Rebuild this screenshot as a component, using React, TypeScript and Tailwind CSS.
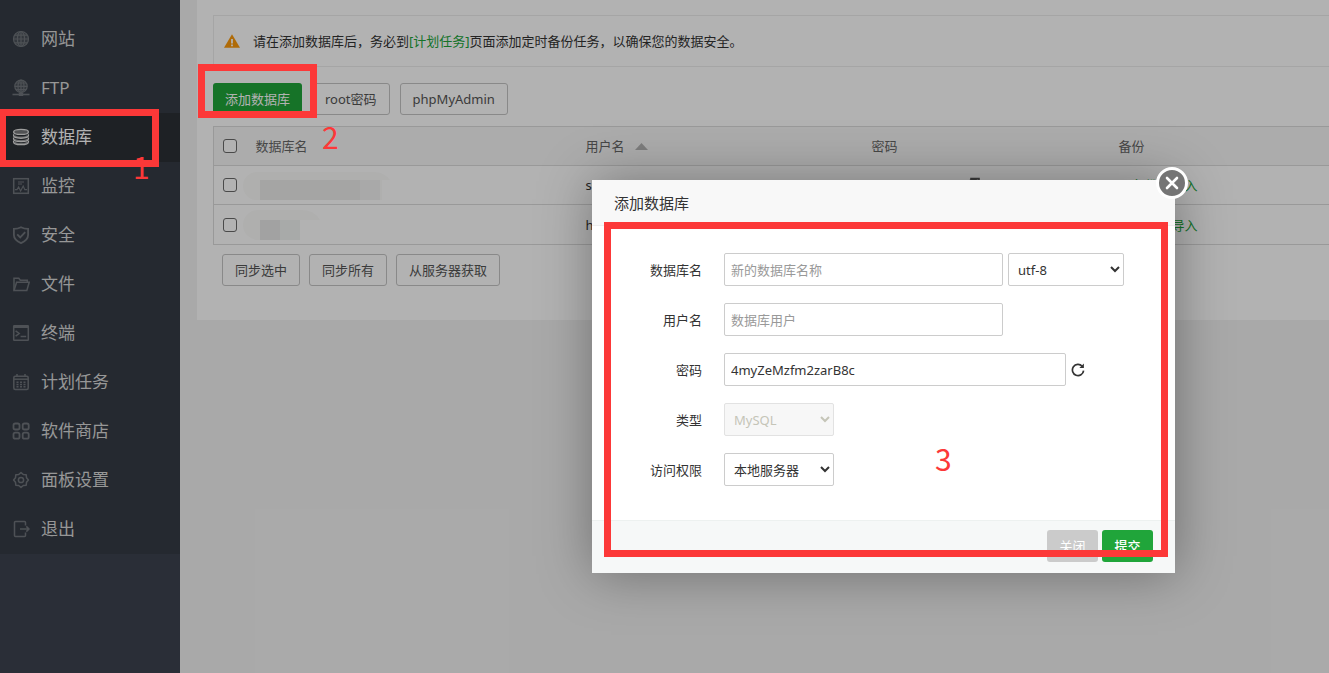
import type { ReactNode } from "react";

function Glyph({ children, width = "1.3" }: { children: ReactNode; width?: string }) {
  return (
    <svg
      viewBox="0 0 18 18"
      className="size-[18px] shrink-0"
      fill="none"
      stroke="currentColor"
      strokeWidth={width}
      aria-hidden="true"
    >
      {children}
    </svg>
  );
}

const icons: Record<string, ReactNode> = {
  site: (
    <Glyph width="1.2">
      <circle cx="9" cy="9" r="7.5" fill="currentColor" fillOpacity="0.35" />
      <ellipse cx="9" cy="9" rx="3.6" ry="7.5" />
      <path d="M9 1.5v15M1.5 9h15M2.6 5.2h12.8M2.6 12.8h12.8" />
    </Glyph>
  ),
  ftp: (
    <Glyph width="1.2">
      <circle cx="9" cy="7.3" r="6.2" fill="currentColor" fillOpacity="0.35" />
      <ellipse cx="9" cy="7.3" rx="3" ry="6.2" />
      <path d="M9 1v12.5M2.8 7.3h12.4M4 4h10M4 10.6h10" />
      <path d="M0.5 15.5h17" strokeWidth="1.6" />
      <path d="M6.8 15.5h4.4" strokeWidth="3" />
    </Glyph>
  ),
  database: (
    <Glyph width="1.3">
      <ellipse cx="9" cy="3.9" rx="7.400" ry="2.500" fill="currentColor" fillOpacity="0.4" />
      <path d="M1.600 6.200v1.400c0 3.500 14.800 3.500 14.800 0V6.200" />
      <path d="M1.600 9.600v1.400c0 3.500 14.800 3.500 14.800 0V9.600" />
      <path d="M1.600 12.800v1.200c0 3.600 14.800 3.600 14.800 0v-1.200" />
      <path d="M2.500 7.700c2 2 11 2 13 0M2.500 11.100c2 2 11 2 13 0M2.500 14.200c2 2 11 2 13 0" strokeOpacity="0.6" />
    </Glyph>
  ),
  monitor: (
    <Glyph width="1.5">
      <rect x="1.7" y="1.7" width="14.6" height="14.6" />
      <path d="M6 5h6M6 7h4" strokeWidth="1" />
      <path d="M3 12.6h2l1.6-2.6 2 4 2.6-5 1.6 3.6H15" strokeWidth="1.1" />
    </Glyph>
  ),
  security: (
    <Glyph width="1.8">
      <path d="M9 1.2c2.4 1.3 4.6 1.7 7.1 1.7v6c0 3.8-3 6.3-7.1 8.2-4.1-1.900-7.100-4.400-7.100-8.200v-6C4.400 2.900 6.600 2.500 9 1.200z" />
      <path d="M5.200 8.400l3 3 5-5.200" />
    </Glyph>
  ),
  files: (
    <Glyph width="1.5">
      <path d="M2 15.500V3.300h4.800l1.500 1.900h7v2" />
      <path d="M2 15.600L4.600 7.200h12.600l-2.400 8.400z" />
    </Glyph>
  ),
  terminal: (
    <Glyph width="1.500">
      <rect x="1.700" y="1.700" width="14.600" height="14.600" rx="0.500" />
      <path d="M1.700 3h14.600" strokeWidth="2" />
      <path d="M3.600 6.800l3.600 2.700-3.600 2.700M8.600 12.600h5.600" strokeWidth="1.500" />
    </Glyph>
  ),
  cron: (
    <Glyph width="1.500">
      <rect x="1.800" y="3.200" width="14.400" height="13.200" rx="1.500" />
      <path d="M1.800 6.200h14.400" />
      <path d="M5 1v3M13 1v3" />
      <path d="M4.500 9.200h9M4.500 11.500h9M4.500 13.800h9" strokeDasharray="2 1.500" />
    </Glyph>
  ),
  store: (
    <Glyph width="1.800">
      <rect x="1.500" y="1.500" width="6" height="6" rx="1.800" />
      <rect x="10.700" y="1.500" width="6" height="6" rx="1.800" />
      <rect x="1.500" y="10.700" width="6" height="6" rx="1.800" />
      <rect x="10.700" y="10.700" width="6" height="6" rx="1.800" />
    </Glyph>
  ),
  settings: (
    <Glyph width="1.500">
      <circle cx="9" cy="9" r="2.600" />
      <path d="M9 1.600L11.300 3.500L14.200 3.800L14.500 6.700L16.400 9L14.500 11.300L14.200 14.200L11.300 14.500L9 16.400L6.700 14.500L3.800 14.200L3.500 11.300L1.600 9L3.500 6.700L3.800 3.800L6.700 3.500z" strokeLinejoin="round" />
    </Glyph>
  ),
  logout: (
    <Glyph width="1.500">
      <path d="M13.500 5.500V2.500a1 1 0 0 0-1-1H3.500a1 1 0 0 0-1 1v13a1 1 0 0 0 1 1h9a1 1 0 0 0 1-1v-3" />
      <path d="M8 9h9M14.300 6.400L17 9l-2.700 2.600" />
    </Glyph>
  ),
};

const menu = [
  ["site", "网站"],
  ["ftp", "FTP"],
  ["database", "数据库"],
  ["monitor", "监控"],
  ["security", "安全"],
  ["files", "文件"],
  ["terminal", "终端"],
  ["cron", "计划任务"],
  ["store", "软件商店"],
  ["settings", "面板设置"],
  ["logout", "退出"],
];

function Sidebar() {
  return (
    <nav className="w-[180px] shrink-0 bg-[#3d4350]">
      <ul className="bg-[#363c46] pt-[15px] text-[17px]">
        {menu.map(([id, label]) => {
          const active = id === "database";
          return (
            <li key={id}>
              <a
                href={"#" + id}
                aria-current={active ? "page" : undefined}
                className={
                  "flex h-[49px] items-center gap-[11px] pb-px pl-3 " +
                  (active ? "bg-[#2c3035] text-white" : "text-[#d8d8d8]")
                }
              >
                <span className={active ? "text-[#e2e2e2]" : "text-[#70757b]"}>{icons[id]}</span>
                {label}
              </a>
            </li>
          );
        })}
      </ul>
    </nav>
  );
}

function OutlineButton({ children }: { children: ReactNode }) {
  return (
    <button type="button" className="h-8 rounded-[3px] border border-[#c4c4c4] px-3 text-[#555]">
      {children}
    </button>
  );
}

function Check({ label }: { label: string }) {
  return (
    <input
      type="checkbox"
      aria-label={label}
      className="block size-[14px] appearance-none rounded-[3px] border border-[#6a6a6a] bg-white"
    />
  );
}

function Backup() {
  return (
    <span className="text-[#20a53a]">
      <a href="#backup">无备份</a> | <a href="#import">导入</a>
    </span>
  );
}

function DatabasePage() {
  return (
    <main className="min-w-0 flex-1 bg-[#f3f3f3] pl-[17px]">
      <div className="bg-white pb-[34px] pl-4 pt-[15px]">
        <div className="flex h-[52px] items-center gap-[13px] border-y border-l border-[#ececec] pl-[10px]">
          <svg viewBox="0 0 16 14" className="h-[14px] w-4" aria-hidden="true">
            <path d="M8 0.300L16 13.700H0z" fill="#fb9a0c" />
            <path d="M8 5v4.500M8 10.500v1.800" stroke="#fff" strokeWidth="1.800" />
          </svg>
          <p>
            请在添加数据库后，务必到
            <a href="#cron" className="text-[#20a53a]">
              [计划任务]
            </a>
            页面添加定时备份任务，以确保您的数据安全。
          </p>
        </div>
        <div className="mt-4 flex gap-[10px]">
          <button type="button" className="h-8 rounded-[3px] bg-[#20a53a] px-3 text-white">
            添加数据库
          </button>
          <OutlineButton>root密码</OutlineButton>
          <OutlineButton>phpMyAdmin</OutlineButton>
        </div>
        <table className="mt-[11px] w-full table-fixed border-collapse border-y border-l border-[#dcdcdc] text-left">
          <colgroup>
            <col className="w-[34px]" />
            <col className="w-[330px]" />
            <col className="w-[286px]" />
            <col className="w-[247px]" />
            <col />
          </colgroup>
          <thead className="bg-[#f7f7f7] text-[#666]">
            <tr className="h-[39px] border-b border-[#dcdcdc]">
              <th className="pl-[9px]">
                <Check label="全选" />
              </th>
              <th className="pl-2 font-normal">数据库名</th>
              <th className="pl-2 font-normal">
                <span className="flex items-center gap-[10px]">
                  用户名
                  <svg viewBox="0 0 13 7" className="h-[7px] w-[13px]" aria-hidden="true">
                    <path d="M6.500 0L13 7H0z" fill="#b4b4b4" />
                  </svg>
                </span>
              </th>
              <th className="pl-2 font-normal">密码</th>
              <th className="pl-2 font-normal">备份</th>
            </tr>
          </thead>
          <tbody>
            <tr className="h-[39px] border-b border-[#dcdcdc]">
              <td className="pl-[9px]">
                <Check label="选择第一行" />
              </td>
              <td>
                <svg viewBox="0 0 150 34" className="-ml-2 block h-[34px] w-[150px]" aria-hidden="true">
                  <path d="M17 4H134Q144 4 150 12H142V32H17A14 14 0 0 1 17 4z" fill="#fbfbfa" />
                  <path d="M20 12h100v20H20z" fill="#ececeb" />
                  <path d="M120 12h20v20h-20z" fill="#f3f3f3" />
                </svg>
              </td>
              <td className="pl-2">s</td>
              <td className="pl-[103px]">
                <svg
                  viewBox="0 0 13 16"
                  className="block h-4 w-[13px]"
                  fill="none"
                  stroke="#555"
                  strokeWidth="1.600"
                  aria-hidden="true"
                >
                  <path d="M4 3V1.500h8v10H10M4 3L1 5v9.500h8V3z" fill="#999" />
                </svg>
              </td>
              <td className="pl-2">
                <Backup />
              </td>
            </tr>
            <tr className="h-10">
              <td className="pl-[9px]">
                <Check label="选择第二行" />
              </td>
              <td>
                <svg viewBox="0 0 80 34" className="-ml-2 block h-[34px] w-20" aria-hidden="true">
                  <path d="M18 2H62Q74 2 80 12H60V32H18A15 15 0 0 1 18 2z" fill="#fbfbfa" />
                  <path d="M20 12h20v20H20z" fill="#e9e9e9" />
                  <path d="M40 12h20v20H40z" fill="#f1f4f3" />
                </svg>
              </td>
              <td className="pl-2">h</td>
              <td />
              <td className="pl-2">
                <Backup />
              </td>
            </tr>
          </tbody>
        </table>
        <div className="mt-[9px] flex gap-[9px] pl-[9px]">
          <OutlineButton>同步选中</OutlineButton>
          <OutlineButton>同步所有</OutlineButton>
          <OutlineButton>从服务器获取</OutlineButton>
        </div>
      </div>
    </main>
  );
}

function Field({ id, label, children }: { id: string; label: string; children: ReactNode }) {
  return (
    <div className="flex h-[33px] items-center">
      <label htmlFor={id} className="mr-[22px] w-[110px] shrink-0 text-right">
        {label}
      </label>
      {children}
    </div>
  );
}

const inputStyle = "h-[33px] rounded-[2px] border border-[#ccc] bg-white px-[6px] placeholder:text-[#999]";
const selectStyle = "h-[33px] rounded-[2px] border border-[#ccc] bg-white px-[5px]";

function AddDatabaseDialog() {
  return (
    <section
      role="dialog"
      aria-label="添加数据库"
      className="absolute left-[592px] top-[180px] w-[583px] bg-white shadow-[1px_1px_50px_rgba(0,0,0,0.35)]"
    >
      <h2 className="flex h-[46px] items-center border-b border-[#eee] bg-[#f8f8f8] pl-[22px] text-[15px]">
        添加数据库
      </h2>
      <form onSubmit={(e) => e.preventDefault()}>
        <div className="flex flex-col gap-[17px] pb-[34px] pt-[27px]">
          <Field id="db-name" label="数据库名">
            <input id="db-name" placeholder="新的数据库名称" className={inputStyle + " w-[279px]"} />
            <select aria-label="编码" className={selectStyle + " ml-[5px] w-[116px]"}>
              <option>utf-8</option>
            </select>
          </Field>
          <Field id="db-user" label="用户名">
            <input id="db-user" placeholder="数据库用户" className={inputStyle + " w-[279px]"} />
          </Field>
          <Field id="db-password" label="密码">
            <input id="db-password" defaultValue="4myZeMzfm2zarB8c" className={inputStyle + " w-[342px]"} />
            <button type="button" aria-label="刷新" className="ml-[5px]">
              <svg viewBox="0 0 14 14" className="size-[14px]" fill="none" stroke="#333" strokeWidth="1.700" aria-hidden="true">
                <path d="M11.200 3.200A5.600 5.600 0 1 0 12.600 7.600" />
                <path d="M12.900 0.400v4.500H8.400z" fill="#333" stroke="none" />
              </svg>
            </button>
          </Field>
          <Field id="db-type" label="类型">
            <select
              id="db-type"
              disabled
              className="h-[33px] w-[110px] rounded-[2px] border border-[#e2e2e2] bg-[#f7f7f7] px-[5px] text-[#c5c5b8] opacity-100"
            >
              <option>MySQL</option>
            </select>
          </Field>
          <Field id="db-access" label="访问权限">
            <select id="db-access" className={selectStyle + " w-[110px]"}>
              <option>本地服务器</option>
            </select>
          </Field>
        </div>
        <div className="flex h-[53px] items-start justify-end gap-1 border-t border-[#edf1f0] bg-[#f6f8f8] pr-[22px] pt-[9px]">
          <button type="button" className="h-8 min-w-[51px] rounded-[3px] bg-[#cbcbcb] px-3 text-white">
            关闭
          </button>
          <button type="submit" className="h-8 min-w-[51px] rounded-[3px] bg-[#20a53a] px-3 font-medium text-white">
            提交
          </button>
        </div>
      </form>
      <button type="button" aria-label="关闭窗口" className="absolute -right-[13px] -top-[13px]">
        <svg viewBox="0 0 32 32" className="size-8" aria-hidden="true">
          <circle cx="16" cy="16" r="14.500" fill="#757575" stroke="#fff" strokeWidth="3" />
          <path d="M11 11l10 10M21 11L11 21" stroke="#fff" strokeWidth="2.600" strokeLinecap="round" />
        </svg>
      </button>
    </section>
  );
}

function Annotations() {
  return (
    <div className="pointer-events-none font-['Noto_Sans_CJK_SC',sans-serif] text-[30px] leading-8 text-[#fc3838]">
      <div className="absolute -left-px top-[109px] h-[58px] w-[160px] border-[7px] border-[#fc3838]" />
      <span className="absolute left-[133px] top-[150px]">1</span>
      <div className="absolute left-[198px] top-[64px] h-[54px] w-[119px] border-[7px] border-[#fc3838]" />
      <span className="absolute left-[322px] top-[120px]">2</span>
      <div className="absolute left-[604px] top-[222px] h-[335px] w-[564px] border-[7px] border-[#fc3838]" />
      <span className="absolute left-[935px] top-[442px]">3</span>
    </div>
  );
}

export default function App() {
  return (
    <div className="relative flex min-h-screen overflow-hidden font-['Noto_Sans','Noto_Sans_CJK_SC',sans-serif] text-[13px] leading-5 text-[#333]">
      <Sidebar />
      <DatabasePage />
      <div className="absolute inset-0 bg-black/30" />
      <AddDatabaseDialog />
      <Annotations />
    </div>
  );
}
